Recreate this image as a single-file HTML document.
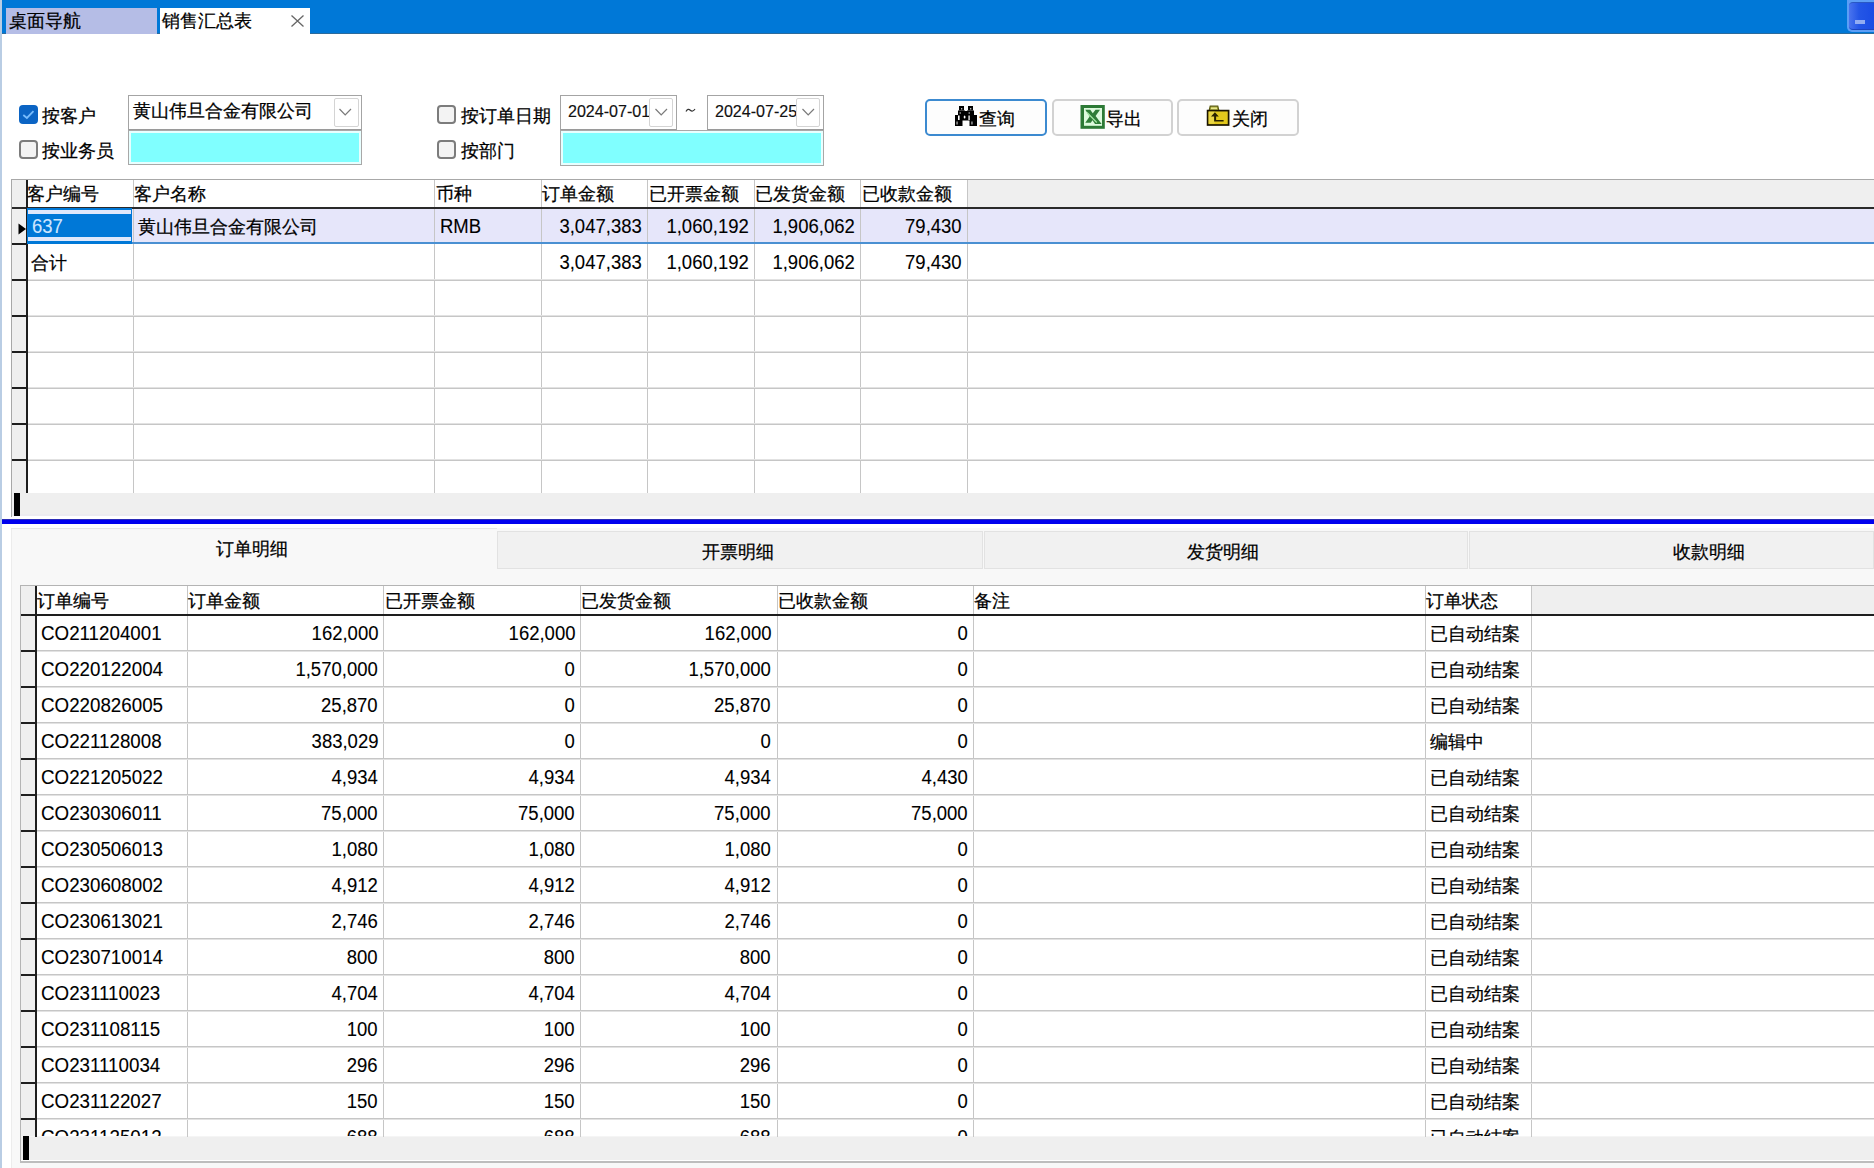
<!DOCTYPE html><html><head><meta charset="utf-8"><style>
*{box-sizing:border-box}
body{margin:0;width:1874px;height:1168px;position:relative;overflow:hidden;background:#fff;font-family:"Liberation Sans",sans-serif;color:#000}
.ab{position:absolute}
.t{position:absolute;white-space:nowrap;line-height:1;-webkit-text-stroke:0.25px currentColor}
.cb{position:absolute;width:19px;height:19px;border:2px solid #7c7c7c;border-radius:4px;background:#f3f3f3}
.cyan{position:absolute;background:#80ffff;border:1px solid #a8a8a8;box-shadow:inset 0 0 0 2px #e8ffff}
.dd{position:absolute;width:25px;height:29px;border:1px solid #d4d4d4;border-radius:3px;background:#fff}
.btn{position:absolute;height:37px;border:2px solid #d2d2d2;border-radius:5px;background:#fdfdfd}
.gl{position:absolute;background:#c6c6c6}
.nr{-webkit-text-stroke:0.1px currentColor!important;font-size:19.5px!important;transform:scaleX(0.949);transform-origin:right}
.nl{-webkit-text-stroke:0.1px currentColor!important;font-size:19.5px!important;transform:scaleX(0.949);transform-origin:left}
.nc{-webkit-text-stroke:0.1px currentColor!important;font-size:19.5px!important;transform:scaleX(0.962);transform-origin:left}
.bl{position:absolute;background:#1e1e1e}

</style></head><body>
<div class="ab" style="left:0;top:0;width:2px;height:1168px;background:#b9cde4"></div>
<div class="ab" style="left:2px;top:0;width:1872px;height:34px;background:#0078d7"></div>
<div class="ab" style="left:2px;top:33px;width:1872px;height:1px;background:#2c6b9c"></div>
<div class="ab" style="left:6px;top:8px;width:151px;height:26px;background:#b5bde6"></div>
<div class="t" style="left:9px;top:12px;font-size:18px">桌面导航</div>
<div class="ab" style="left:160px;top:8px;width:150px;height:26px;background:#fff"></div>
<div class="t" style="left:162px;top:12px;font-size:18px">销售汇总表</div>
<svg class="ab" style="left:290px;top:14px" width="15" height="14"><path d="M1.5 1.5 L13.5 12.5 M13.5 1.5 L1.5 12.5" stroke="#666" stroke-width="1.3"/></svg>
<div class="ab" style="left:1847px;top:0;width:27px;height:32px;background:#5c9ef6;border-radius:0 0 0 5px"></div>
<div class="ab" style="left:1849px;top:2px;width:25px;height:28px;background:linear-gradient(90deg,#4a74ee,#2456e6 40%,#1a4ce4);border-radius:4px 0 0 4px;border-top:1px solid #2a58c4;border-bottom:1px solid #1c44c0"></div>
<div class="ab" style="left:1855px;top:20px;width:10px;height:4px;background:#92acf2"></div>
<div class="ab" style="left:19px;top:105px;width:19px;height:19px;border-radius:4px;background:#0b64c4"></div>
<svg class="ab" style="left:19px;top:105px" width="19" height="19"><path d="M4.3 10 L7.9 13 L14.5 6.2" fill="none" stroke="#78bcfc" stroke-width="1.8"/></svg>
<div class="t" style="left:42px;top:107px;font-size:18px">按客户</div>
<div class="cb" style="left:19px;top:140px"></div>
<div class="t" style="left:42px;top:142px;font-size:18px">按业务员</div>
<div class="ab" style="left:128px;top:95px;width:234px;height:36px;border:1px solid #a4a4a4;border-bottom:2px solid #9a9a9a;background:#fff"></div>
<div class="t" style="left:133px;top:102px;font-size:18px">黄山伟旦合金有限公司</div>
<div class="dd" style="left:334px;top:98px;border-radius:2px"></div>
<svg class="ab" style="left:338px;top:107px" width="15" height="10"><path d="M1.5 2 L7.2 8 L13 2" fill="none" stroke="#7a7a7a" stroke-width="1.2"/></svg>
<div class="cyan" style="left:128px;top:130px;width:234px;height:35px"></div>
<div class="cb" style="left:437px;top:105px"></div>
<div class="t" style="left:461px;top:107px;font-size:18px">按订单日期</div>
<div class="cb" style="left:437px;top:140px"></div>
<div class="t" style="left:461px;top:142px;font-size:18px">按部门</div>
<div class="ab" style="left:560px;top:95px;width:117px;height:36px;border:1px solid #a4a4a4;border-bottom:2px solid #9a9a9a;background:#fff;overflow:hidden"><div class="t" style="left:7px;top:7px;font-size:17px;-webkit-text-stroke:0.15px #111;color:#111;transform:scaleX(0.945);transform-origin:left">2024-07-01</div></div>
<div class="dd" style="left:649px;top:98px;width:24px;border-radius:2px"></div>
<svg class="ab" style="left:654px;top:107px" width="15" height="10"><path d="M1.5 2 L7.2 8 L13 2" fill="none" stroke="#7a7a7a" stroke-width="1.2"/></svg>
<div class="ab" style="left:707px;top:95px;width:117px;height:36px;border:1px solid #a4a4a4;border-bottom:2px solid #9a9a9a;background:#fff;overflow:hidden"><div class="t" style="left:7px;top:7px;font-size:17px;-webkit-text-stroke:0.15px #111;color:#111;transform:scaleX(0.945);transform-origin:left">2024-07-25</div></div>
<div class="dd" style="left:796px;top:98px;width:24px;border-radius:2px"></div>
<svg class="ab" style="left:801px;top:107px" width="15" height="10"><path d="M1.5 2 L7.2 8 L13 2" fill="none" stroke="#7a7a7a" stroke-width="1.2"/></svg>
<svg class="ab" style="left:684px;top:105px" width="14" height="10"><path d="M2 6.5 Q4 3 6.3 5.2 Q8.6 7.4 11 4" fill="none" stroke="#333" stroke-width="1.2"/></svg>
<div class="cyan" style="left:560px;top:130px;width:264px;height:36px"></div>
<div class="btn" style="left:925px;top:99px;width:122px;border-color:#3c8ad0"></div>
<div class="btn" style="left:1052px;top:99px;width:121px"></div>
<div class="btn" style="left:1177px;top:99px;width:122px"></div>
<svg class="ab" style="left:950px;top:102px" width="32" height="28">
<g fill="#000">
<rect x="9" y="4" width="5" height="4.5"/><rect x="18" y="4" width="5" height="4.5"/>
<rect x="8" y="8.5" width="7" height="5"/><rect x="17" y="8.5" width="7" height="5"/>
<rect x="5" y="13" width="7.5" height="11"/><rect x="19.5" y="13" width="7.5" height="11"/>
<rect x="12" y="9" width="8" height="9.5"/>
</g>
<rect x="11" y="6" width="1.3" height="1.5" fill="#bbb"/><rect x="20" y="6" width="1.3" height="1.5" fill="#bbb"/>
<rect x="8" y="13.5" width="1.6" height="4.5" fill="#fff"/>
<ellipse cx="14.6" cy="15" rx="0.9" ry="1.6" fill="#fff"/>
<rect x="18.3" y="13.5" width="1.6" height="4.5" fill="#ccc"/>
<rect x="9.5" y="10.2" width="1.5" height="1.6" fill="#888"/><rect x="18.5" y="10.2" width="1.5" height="1.6" fill="#888"/>
<rect x="6.3" y="19.5" width="1.5" height="3" fill="#999"/><rect x="21.2" y="19.5" width="1.5" height="3" fill="#999"/>
</svg>
<div class="t" style="left:979px;top:110px;font-size:18px">查询</div>
<svg class="ab" style="left:1076px;top:100px" width="32" height="32">
<rect x="4.5" y="5" width="24.3" height="23.8" fill="#2d7a36"/>
<rect x="8" y="8" width="18" height="17.8" fill="#ddfadd"/>
<path d="M9.3 9.8 L14.2 9.8 L16.8 13.2 L19.5 9.8 L24 9.8 L19.6 16 L25.6 24 L19 24 L16.5 20.3 L14.8 22.8 L9.3 22.8 L13.6 16.5 Z" fill="#2f7d38"/>
<path d="M11 12.5 L20.8 22.5" stroke="#a8eaa8" stroke-width="1.1"/>
</svg>
<div class="t" style="left:1106px;top:110px;font-size:18px">导出</div>
<svg class="ab" style="left:1202px;top:100px" width="32" height="32">
<path d="M7.2 10.5 L8.2 6.2 L15.8 6.2 L16.8 10.5 Z" fill="#b0b040" stroke="#5a5a10" stroke-width="1.2"/>
<rect x="9" y="7.6" width="6" height="1.6" fill="#e8e890"/>
<rect x="5.6" y="10.6" width="21" height="14.4" fill="#e2c81c" stroke="#1a1400" stroke-width="1.7"/>
<rect x="6.6" y="11.6" width="6" height="12" fill="#f0e060" opacity="0.6"/>
<path d="M12.9 12.3 L16.8 16.6 L14.1 16.6 L14.1 20 L21.6 20 L21.6 21.6 L12.1 21.6 L12.1 16.6 L9 16.6 Z" fill="#2a2200"/>
</svg>
<div class="t" style="left:1232px;top:110px;font-size:18px">关闭</div>
<div class="gl" style="left:11px;top:179px;width:1863px;height:1px;background:#a8a8a8"></div>
<div class="gl" style="left:11px;top:179px;width:1px;height:338px;background:#a8a8a8"></div>
<div class="ab" style="left:12px;top:180px;width:14px;height:27px;background:#efefef"></div>
<div class="ab" style="left:968px;top:180px;width:906px;height:27px;background:#efefef"></div>
<div class="ab" style="left:12px;top:208px;width:14px;height:285px;background:#efefef"></div>
<div class="ab" style="left:12px;top:493px;width:1862px;height:23px;background:#efefef"></div>
<div class="ab" style="left:12px;top:514px;width:1862px;height:2px;background:#ecebf0"></div>
<div class="ab" style="left:14px;top:493px;width:6px;height:23px;background:#000"></div>
<div class="ab" style="left:27px;top:208px;width:1847px;height:35px;background:#e6e6fa"></div>
<div class="gl" style="left:133px;top:180px;width:1px;height:313px"></div>
<div class="gl" style="left:434px;top:180px;width:1px;height:313px"></div>
<div class="gl" style="left:541px;top:180px;width:1px;height:313px"></div>
<div class="gl" style="left:647px;top:180px;width:1px;height:313px"></div>
<div class="gl" style="left:754px;top:180px;width:1px;height:313px"></div>
<div class="gl" style="left:860px;top:180px;width:1px;height:313px"></div>
<div class="gl" style="left:967px;top:180px;width:1px;height:313px"></div>
<div class="gl" style="left:27px;top:279px;width:1847px;height:1px;background:#e2e2e2"></div>
<div class="gl" style="left:27px;top:280px;width:1847px;height:1px"></div>
<div class="bl" style="left:12px;top:279px;width:15px;height:2px"></div>
<div class="gl" style="left:27px;top:315px;width:1847px;height:1px;background:#e2e2e2"></div>
<div class="gl" style="left:27px;top:316px;width:1847px;height:1px"></div>
<div class="bl" style="left:12px;top:315px;width:15px;height:2px"></div>
<div class="gl" style="left:27px;top:351px;width:1847px;height:1px;background:#e2e2e2"></div>
<div class="gl" style="left:27px;top:352px;width:1847px;height:1px"></div>
<div class="bl" style="left:12px;top:351px;width:15px;height:2px"></div>
<div class="gl" style="left:27px;top:387px;width:1847px;height:1px;background:#e2e2e2"></div>
<div class="gl" style="left:27px;top:388px;width:1847px;height:1px"></div>
<div class="bl" style="left:12px;top:387px;width:15px;height:2px"></div>
<div class="gl" style="left:27px;top:423px;width:1847px;height:1px;background:#e2e2e2"></div>
<div class="gl" style="left:27px;top:424px;width:1847px;height:1px"></div>
<div class="bl" style="left:12px;top:423px;width:15px;height:2px"></div>
<div class="gl" style="left:27px;top:459px;width:1847px;height:1px;background:#e2e2e2"></div>
<div class="gl" style="left:27px;top:460px;width:1847px;height:1px"></div>
<div class="bl" style="left:12px;top:459px;width:15px;height:2px"></div>
<div class="ab" style="left:27px;top:242px;width:1847px;height:2px;background:#4a90d2"></div>
<div class="bl" style="left:12px;top:243px;width:15px;height:2px"></div>
<div class="bl" style="left:12px;top:207px;width:1862px;height:2px;background:#2a2a2a"></div>
<div class="bl" style="left:26px;top:180px;width:2px;height:313px"></div>
<div class="ab" style="left:27px;top:208px;width:105px;height:36px;background:#0078d7"></div>
<div class="ab" style="left:28px;top:210px;width:103px;height:4px;background:#dfe8fb"></div>
<div class="ab" style="left:28px;top:237px;width:103px;height:4px;background:#dfe8fb"></div>
<svg class="ab" style="left:18px;top:223px" width="9" height="12"><path d="M0.5 0.5 L8 6 L0.5 11.5 Z" fill="#000"/></svg>
<div class="t" style="left:27px;top:185px;font-size:18px">客户编号</div>
<div class="t" style="left:134px;top:185px;font-size:18px">客户名称</div>
<div class="t" style="left:436px;top:185px;font-size:18px">币种</div>
<div class="t" style="left:542px;top:185px;font-size:18px">订单金额</div>
<div class="t" style="left:649px;top:185px;font-size:18px">已开票金额</div>
<div class="t" style="left:755px;top:185px;font-size:18px">已发货金额</div>
<div class="t" style="left:862px;top:185px;font-size:18px">已收款金额</div>
<div class="t nl" style="left:32px;top:217px;color:#cfe6ff">637</div>
<div class="t" style="left:138px;top:218px;font-size:18px">黄山伟旦合金有限公司</div>
<div class="t nl" style="left:440px;top:217px">RMB</div>
<div class="t nr" style="right:1232px;top:217px">3,047,383</div>
<div class="t nr" style="right:1125px;top:217px">1,060,192</div>
<div class="t nr" style="right:1019px;top:217px">1,906,062</div>
<div class="t nr" style="right:912px;top:217px">79,430</div>
<div class="t nr" style="right:1232px;top:253px">3,047,383</div>
<div class="t nr" style="right:1125px;top:253px">1,060,192</div>
<div class="t nr" style="right:1019px;top:253px">1,906,062</div>
<div class="t nr" style="right:912px;top:253px">79,430</div>
<div class="t" style="left:31px;top:254px;font-size:18px">合计</div>
<div class="ab" style="left:2px;top:519px;width:1872px;height:5px;background:#0000ee;border-top:1px solid #2a2ab8"></div>
<div class="ab" style="left:11px;top:528px;width:1863px;height:640px;background:#f8f8f8;border-left:1px solid #ececec"></div>
<div class="ab" style="left:11px;top:528px;width:486px;height:1px;background:#e6e6e6"></div>
<div class="ab" style="left:497px;top:531px;width:486px;height:38px;background:#f1f1f1;border:1px solid #e2e2e2"></div>
<div class="ab" style="left:984px;top:531px;width:484px;height:38px;background:#f1f1f1;border:1px solid #e2e2e2"></div>
<div class="ab" style="left:1469px;top:531px;width:405px;height:38px;background:#f1f1f1;border:1px solid #e2e2e2"></div>
<div class="t" style="left:216px;top:540px;font-size:18px">订单明细</div>
<div class="t" style="left:702px;top:543px;font-size:18px">开票明细</div>
<div class="t" style="left:1187px;top:543px;font-size:18px">发货明细</div>
<div class="t" style="left:1673px;top:543px;font-size:18px">收款明细</div>
<div class="gl" style="left:20px;top:585px;width:1854px;height:1px;background:#b4b4b4"></div>
<div class="gl" style="left:20px;top:585px;width:1px;height:578px;background:#b4b4b4"></div>
<div class="gl" style="left:20px;top:1161px;width:1854px;height:2px;background:#bdbdbd"></div>
<div class="ab" style="left:21px;top:586px;width:1853px;height:551px;background:#fff"></div>
<div class="ab" style="left:21px;top:586px;width:14px;height:551px;background:#efefef"></div>
<div class="ab" style="left:1532px;top:586px;width:342px;height:28px;background:#efefef"></div>
<div class="ab" style="left:21px;top:1136px;width:1853px;height:24px;background:#efefef;border-top:1px solid #f5f5f5"></div>
<div class="ab" style="left:21px;top:1160px;width:1853px;height:1px;background:#fff"></div>
<div class="ab" style="left:23px;top:1136px;width:6px;height:24px;background:#000"></div>
<div class="gl" style="left:187px;top:586px;width:1px;height:551px"></div>
<div class="gl" style="left:383px;top:586px;width:1px;height:551px"></div>
<div class="gl" style="left:580px;top:586px;width:1px;height:551px"></div>
<div class="gl" style="left:777px;top:586px;width:1px;height:551px"></div>
<div class="gl" style="left:973px;top:586px;width:1px;height:551px"></div>
<div class="gl" style="left:1425px;top:586px;width:1px;height:551px"></div>
<div class="gl" style="left:1531px;top:586px;width:1px;height:551px"></div>
<div class="gl" style="left:36px;top:650px;width:1838px;height:1px"></div>
<div class="gl" style="left:36px;top:651px;width:1838px;height:1px;background:#e2e2e2"></div>
<div class="bl" style="left:21px;top:650px;width:15px;height:2px"></div>
<div class="gl" style="left:36px;top:686px;width:1838px;height:1px"></div>
<div class="gl" style="left:36px;top:687px;width:1838px;height:1px;background:#e2e2e2"></div>
<div class="bl" style="left:21px;top:686px;width:15px;height:2px"></div>
<div class="gl" style="left:36px;top:722px;width:1838px;height:1px"></div>
<div class="gl" style="left:36px;top:723px;width:1838px;height:1px;background:#e2e2e2"></div>
<div class="bl" style="left:21px;top:722px;width:15px;height:2px"></div>
<div class="gl" style="left:36px;top:758px;width:1838px;height:1px"></div>
<div class="gl" style="left:36px;top:759px;width:1838px;height:1px;background:#e2e2e2"></div>
<div class="bl" style="left:21px;top:758px;width:15px;height:2px"></div>
<div class="gl" style="left:36px;top:794px;width:1838px;height:1px"></div>
<div class="gl" style="left:36px;top:795px;width:1838px;height:1px;background:#e2e2e2"></div>
<div class="bl" style="left:21px;top:794px;width:15px;height:2px"></div>
<div class="gl" style="left:36px;top:830px;width:1838px;height:1px"></div>
<div class="gl" style="left:36px;top:831px;width:1838px;height:1px;background:#e2e2e2"></div>
<div class="bl" style="left:21px;top:830px;width:15px;height:2px"></div>
<div class="gl" style="left:36px;top:866px;width:1838px;height:1px"></div>
<div class="gl" style="left:36px;top:867px;width:1838px;height:1px;background:#e2e2e2"></div>
<div class="bl" style="left:21px;top:866px;width:15px;height:2px"></div>
<div class="gl" style="left:36px;top:902px;width:1838px;height:1px"></div>
<div class="gl" style="left:36px;top:903px;width:1838px;height:1px;background:#e2e2e2"></div>
<div class="bl" style="left:21px;top:902px;width:15px;height:2px"></div>
<div class="gl" style="left:36px;top:938px;width:1838px;height:1px"></div>
<div class="gl" style="left:36px;top:939px;width:1838px;height:1px;background:#e2e2e2"></div>
<div class="bl" style="left:21px;top:938px;width:15px;height:2px"></div>
<div class="gl" style="left:36px;top:974px;width:1838px;height:1px"></div>
<div class="gl" style="left:36px;top:975px;width:1838px;height:1px;background:#e2e2e2"></div>
<div class="bl" style="left:21px;top:974px;width:15px;height:2px"></div>
<div class="gl" style="left:36px;top:1010px;width:1838px;height:1px"></div>
<div class="gl" style="left:36px;top:1011px;width:1838px;height:1px;background:#e2e2e2"></div>
<div class="bl" style="left:21px;top:1010px;width:15px;height:2px"></div>
<div class="gl" style="left:36px;top:1046px;width:1838px;height:1px"></div>
<div class="gl" style="left:36px;top:1047px;width:1838px;height:1px;background:#e2e2e2"></div>
<div class="bl" style="left:21px;top:1046px;width:15px;height:2px"></div>
<div class="gl" style="left:36px;top:1082px;width:1838px;height:1px"></div>
<div class="gl" style="left:36px;top:1083px;width:1838px;height:1px;background:#e2e2e2"></div>
<div class="bl" style="left:21px;top:1082px;width:15px;height:2px"></div>
<div class="gl" style="left:36px;top:1118px;width:1838px;height:1px"></div>
<div class="gl" style="left:36px;top:1119px;width:1838px;height:1px;background:#e2e2e2"></div>
<div class="bl" style="left:21px;top:1118px;width:15px;height:2px"></div>
<div class="bl" style="left:21px;top:614px;width:1853px;height:2px"></div>
<div class="bl" style="left:35px;top:586px;width:2px;height:551px"></div>
<div class="t" style="left:37px;top:592px;font-size:18px">订单编号</div>
<div class="t" style="left:188px;top:592px;font-size:18px">订单金额</div>
<div class="t" style="left:385px;top:592px;font-size:18px">已开票金额</div>
<div class="t" style="left:581px;top:592px;font-size:18px">已发货金额</div>
<div class="t" style="left:778px;top:592px;font-size:18px">已收款金额</div>
<div class="t" style="left:974px;top:592px;font-size:18px">备注</div>
<div class="t" style="left:1426px;top:592px;font-size:18px">订单状态</div>
<div class="ab" style="left:21px;top:586px;width:1853px;height:550px;overflow:hidden">
<div class="t nc" style="left:20px;top:38px">CO211204001</div>
<div class="t nr" style="right:1496px;top:38px">162,000</div>
<div class="t nr" style="right:1299px;top:38px">162,000</div>
<div class="t nr" style="right:1103px;top:38px">162,000</div>
<div class="t nr" style="right:906px;top:38px">0</div>
<div class="t" style="left:1409px;top:39px;font-size:18px">已自动结案</div>
<div class="t nc" style="left:20px;top:74px">CO220122004</div>
<div class="t nr" style="right:1496px;top:74px">1,570,000</div>
<div class="t nr" style="right:1299px;top:74px">0</div>
<div class="t nr" style="right:1103px;top:74px">1,570,000</div>
<div class="t nr" style="right:906px;top:74px">0</div>
<div class="t" style="left:1409px;top:75px;font-size:18px">已自动结案</div>
<div class="t nc" style="left:20px;top:110px">CO220826005</div>
<div class="t nr" style="right:1496px;top:110px">25,870</div>
<div class="t nr" style="right:1299px;top:110px">0</div>
<div class="t nr" style="right:1103px;top:110px">25,870</div>
<div class="t nr" style="right:906px;top:110px">0</div>
<div class="t" style="left:1409px;top:111px;font-size:18px">已自动结案</div>
<div class="t nc" style="left:20px;top:146px">CO221128008</div>
<div class="t nr" style="right:1496px;top:146px">383,029</div>
<div class="t nr" style="right:1299px;top:146px">0</div>
<div class="t nr" style="right:1103px;top:146px">0</div>
<div class="t nr" style="right:906px;top:146px">0</div>
<div class="t" style="left:1409px;top:147px;font-size:18px">编辑中</div>
<div class="t nc" style="left:20px;top:182px">CO221205022</div>
<div class="t nr" style="right:1496px;top:182px">4,934</div>
<div class="t nr" style="right:1299px;top:182px">4,934</div>
<div class="t nr" style="right:1103px;top:182px">4,934</div>
<div class="t nr" style="right:906px;top:182px">4,430</div>
<div class="t" style="left:1409px;top:183px;font-size:18px">已自动结案</div>
<div class="t nc" style="left:20px;top:218px">CO230306011</div>
<div class="t nr" style="right:1496px;top:218px">75,000</div>
<div class="t nr" style="right:1299px;top:218px">75,000</div>
<div class="t nr" style="right:1103px;top:218px">75,000</div>
<div class="t nr" style="right:906px;top:218px">75,000</div>
<div class="t" style="left:1409px;top:219px;font-size:18px">已自动结案</div>
<div class="t nc" style="left:20px;top:254px">CO230506013</div>
<div class="t nr" style="right:1496px;top:254px">1,080</div>
<div class="t nr" style="right:1299px;top:254px">1,080</div>
<div class="t nr" style="right:1103px;top:254px">1,080</div>
<div class="t nr" style="right:906px;top:254px">0</div>
<div class="t" style="left:1409px;top:255px;font-size:18px">已自动结案</div>
<div class="t nc" style="left:20px;top:290px">CO230608002</div>
<div class="t nr" style="right:1496px;top:290px">4,912</div>
<div class="t nr" style="right:1299px;top:290px">4,912</div>
<div class="t nr" style="right:1103px;top:290px">4,912</div>
<div class="t nr" style="right:906px;top:290px">0</div>
<div class="t" style="left:1409px;top:291px;font-size:18px">已自动结案</div>
<div class="t nc" style="left:20px;top:326px">CO230613021</div>
<div class="t nr" style="right:1496px;top:326px">2,746</div>
<div class="t nr" style="right:1299px;top:326px">2,746</div>
<div class="t nr" style="right:1103px;top:326px">2,746</div>
<div class="t nr" style="right:906px;top:326px">0</div>
<div class="t" style="left:1409px;top:327px;font-size:18px">已自动结案</div>
<div class="t nc" style="left:20px;top:362px">CO230710014</div>
<div class="t nr" style="right:1496px;top:362px">800</div>
<div class="t nr" style="right:1299px;top:362px">800</div>
<div class="t nr" style="right:1103px;top:362px">800</div>
<div class="t nr" style="right:906px;top:362px">0</div>
<div class="t" style="left:1409px;top:363px;font-size:18px">已自动结案</div>
<div class="t nc" style="left:20px;top:398px">CO231110023</div>
<div class="t nr" style="right:1496px;top:398px">4,704</div>
<div class="t nr" style="right:1299px;top:398px">4,704</div>
<div class="t nr" style="right:1103px;top:398px">4,704</div>
<div class="t nr" style="right:906px;top:398px">0</div>
<div class="t" style="left:1409px;top:399px;font-size:18px">已自动结案</div>
<div class="t nc" style="left:20px;top:434px">CO231108115</div>
<div class="t nr" style="right:1496px;top:434px">100</div>
<div class="t nr" style="right:1299px;top:434px">100</div>
<div class="t nr" style="right:1103px;top:434px">100</div>
<div class="t nr" style="right:906px;top:434px">0</div>
<div class="t" style="left:1409px;top:435px;font-size:18px">已自动结案</div>
<div class="t nc" style="left:20px;top:470px">CO231110034</div>
<div class="t nr" style="right:1496px;top:470px">296</div>
<div class="t nr" style="right:1299px;top:470px">296</div>
<div class="t nr" style="right:1103px;top:470px">296</div>
<div class="t nr" style="right:906px;top:470px">0</div>
<div class="t" style="left:1409px;top:471px;font-size:18px">已自动结案</div>
<div class="t nc" style="left:20px;top:506px">CO231122027</div>
<div class="t nr" style="right:1496px;top:506px">150</div>
<div class="t nr" style="right:1299px;top:506px">150</div>
<div class="t nr" style="right:1103px;top:506px">150</div>
<div class="t nr" style="right:906px;top:506px">0</div>
<div class="t" style="left:1409px;top:507px;font-size:18px">已自动结案</div>
<div class="t nc" style="left:20px;top:542px">CO231125012</div>
<div class="t nr" style="right:1496px;top:542px">688</div>
<div class="t nr" style="right:1299px;top:542px">688</div>
<div class="t nr" style="right:1103px;top:542px">688</div>
<div class="t nr" style="right:906px;top:542px">0</div>
<div class="t" style="left:1409px;top:543px;font-size:18px">已自动结案</div>
</div>
</body></html>
